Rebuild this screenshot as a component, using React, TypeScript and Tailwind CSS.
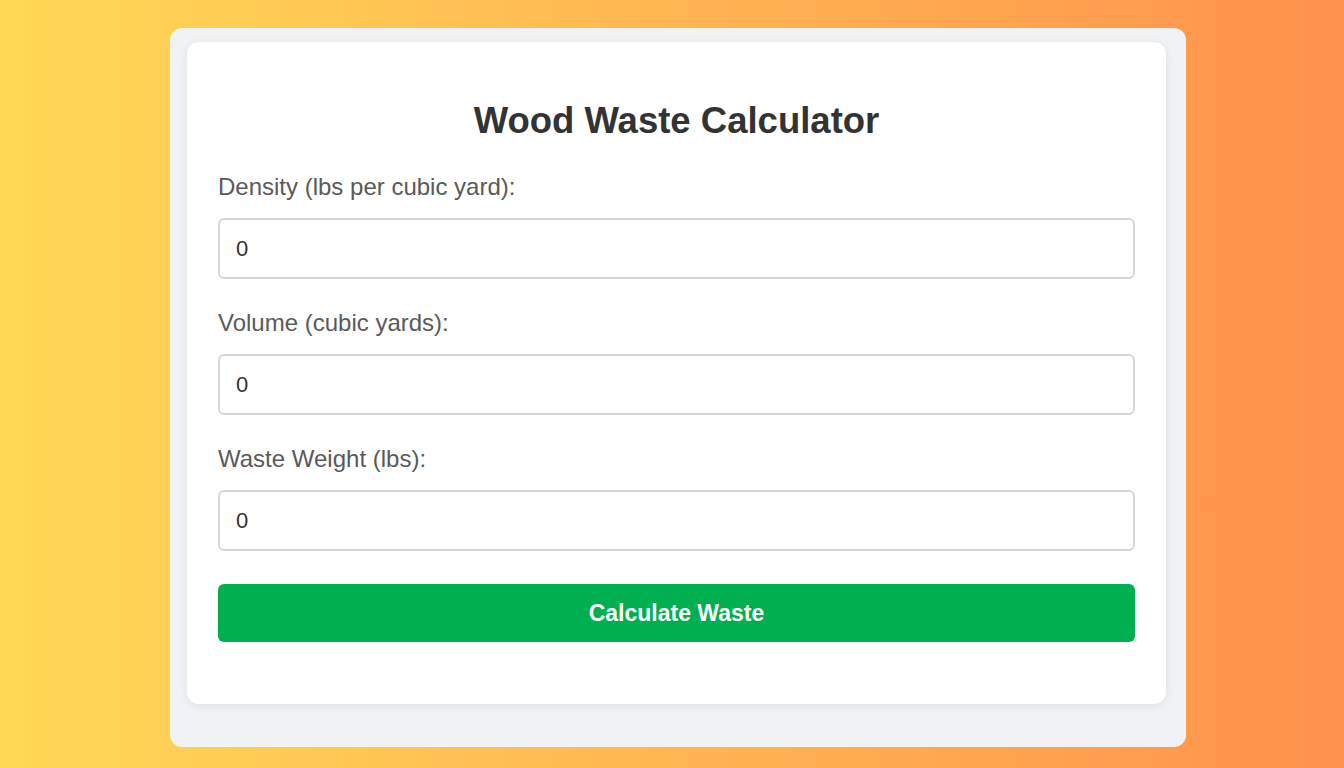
import { useState } from "react";

const fields = [
  { id: "density", label: "Density (lbs per cubic yard):" },
  { id: "volume", label: "Volume (cubic yards):" },
  { id: "weight", label: "Waste Weight (lbs):" },
];

export default function App() {
  const [values, setValues] = useState<Record<string, string>>({
    density: "0",
    volume: "0",
    weight: "0",
  });

  const calculate = () => {
    const d = parseFloat(values.density) || 0;
    const v = parseFloat(values.volume) || 0;
    setValues((prev) => ({ ...prev, weight: String(d * v) }));
  };

  return (
    <div
      className="min-h-screen w-full bg-gradient-to-r from-[#ffd956] to-[#ff914d] pl-[170px] pt-[28px]"
      style={{ fontFamily: '"Liberation Sans", Arial, sans-serif' }}
    >
      <div className="w-[1016px] rounded-xl bg-[#f1f2f3] pt-[14px] pl-[17px] pr-[20px] pb-[43px]">
        <div className="rounded-xl bg-white px-[31px] pt-[59px] pb-[62px] shadow-[0_2px_10px_rgba(0,0,0,0.08)]">
          <h2 className="text-center text-[36.5px] font-bold leading-[40px] text-[#333] mb-[32px]">
            Wood Waste Calculator
          </h2>
          {fields.map((f) => (
            <div key={f.id} className="mb-[30px]">
              <label
                htmlFor={f.id}
                className="block text-[24px] leading-[28px] text-[#5a5a5a] mb-[17px]"
              >
                {f.label}
              </label>
              <input
                id={f.id}
                type="text"
                value={values[f.id]}
                onChange={(e) =>
                  setValues((prev) => ({ ...prev, [f.id]: e.target.value }))
                }
                className="block h-[61px] w-full rounded-md border-2 border-[#d6d6d6] px-[16px] text-[22px] text-[#333] outline-none"
              />
            </div>
          ))}
          <button
            onClick={calculate}
            className="mt-[33px] block h-[58px] w-full rounded-md bg-[#00b050] text-[23px] font-bold text-white"
          >
            Calculate Waste
          </button>
        </div>
      </div>
    </div>
  );
}
